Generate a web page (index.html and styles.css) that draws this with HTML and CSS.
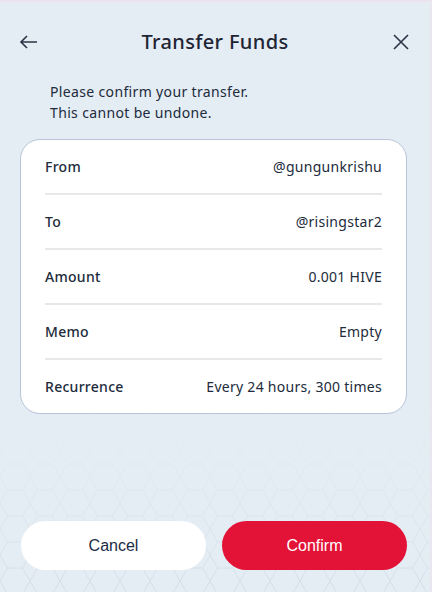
FILE: index.html
```html
<!DOCTYPE html>
<html lang="en">
<head>
  <meta charset="UTF-8">
  <title>Transfer Funds</title>
  <link rel="stylesheet" href="styles.css">
</head>
<body>
  <div class="screen">
    <svg class="hex-bg" width="432" height="180" viewBox="0 0 432 180">
      <defs>
        <pattern id="hex" width="30" height="26" patternUnits="userSpaceOnUse">
          <path d="M7.5 0 L22.5 0 L30 13 L22.5 26 L7.5 26 L0 13 Z" fill="none" stroke="#c8d4e0" stroke-width="1"/>
        </pattern>
        <linearGradient id="fade" x1="0" y1="0" x2="0" y2="1">
          <stop offset="0" stop-color="#fff" stop-opacity="0"/>
          <stop offset="0.5" stop-color="#fff" stop-opacity="0.4"/>
          <stop offset="1" stop-color="#fff" stop-opacity="1"/>
        </linearGradient>
        <mask id="fadeMask">
          <rect width="432" height="180" fill="url(#fade)"/>
        </mask>
      </defs>
      <rect width="432" height="180" fill="url(#hex)" mask="url(#fadeMask)"/>
    </svg>

    <div class="header">
      <button class="icon-btn" aria-label="Back">
        <svg width="20" height="20" viewBox="0 0 20 20">
          <path d="M18 10 H2 M8 4 L2 10 L8 16" fill="none" stroke="#2b3445" stroke-width="1.6"/>
        </svg>
      </button>
      <h1>Transfer Funds</h1>
      <button class="icon-btn" aria-label="Close">
        <svg width="20" height="20" viewBox="0 0 20 20">
          <path d="M3 3 L17 17 M17 3 L3 17" fill="none" stroke="#2b3445" stroke-width="1.6"/>
        </svg>
      </button>
    </div>

    <p class="intro">Please confirm your transfer.<br>This cannot be undone.</p>

    <div class="card">
      <div class="row"><span class="label">From</span><span class="value">@gungunkrishu</span></div>
      <div class="row"><span class="label">To</span><span class="value">@risingstar2</span></div>
      <div class="row"><span class="label">Amount</span><span class="value">0.001 HIVE</span></div>
      <div class="row"><span class="label">Memo</span><span class="value">Empty</span></div>
      <div class="row"><span class="label">Recurrence</span><span class="value">Every 24 hours, 300 times</span></div>
    </div>

    <div class="actions">
      <button class="btn btn-cancel">Cancel</button>
      <button class="btn btn-confirm">Confirm</button>
    </div>
  </div>
</body>
</html>
```

FILE: styles.css
```css
body { margin: 0; background: #e4ecf4; font-family: "Noto Sans", sans-serif; color: #212b3b; }
.screen {
  position: relative;
  width: 432px;
  height: 592px;
  box-sizing: border-box;
  border-top: 2px solid #ece3f0;
  border-right: 2px solid #e8e6ef;
  display: flex;
  flex-direction: column;
  overflow: hidden;
}
.hex-bg { position: absolute; left: 0; bottom: 0; opacity: 0.55; }
.header {
  display: flex;
  align-items: center;
  justify-content: space-between;
  padding: 0 18px 0 18px;
  height: 79px;
}
.header h1 { margin: 0; font-size: 20px; font-weight: 500; letter-spacing: 0.35px; color: #1e2433; }
.icon-btn { background: none; border: none; padding: 0; width: 22px; height: 22px; display: flex; align-items: center; justify-content: center; }
.intro { margin: 0 0 16px 50px; font-size: 14px; line-height: 21px; letter-spacing: 0.35px; color: #212b3b; }
.card {
  margin: 0 23px 0 20px;
  background: #fff;
  border: 1px solid #b8c5d8;
  border-radius: 20px;
  padding: 0 24px;
}
.row {
  display: flex;
  justify-content: space-between;
  align-items: center;
  height: 53px;
  font-size: 14px;
  letter-spacing: 0.28px;
}
.row + .row { border-top: 2px solid #e8e8e8; }
.label { font-weight: 500; }
.value { font-weight: 400; }
.actions {
  position: relative;
  margin-top: auto;
  display: flex;
  gap: 16px;
  padding: 0 23px 22px 21px;
}
.btn {
  flex: 1;
  height: 49px;
  border: none;
  border-radius: 25px;
  font-family: "Liberation Sans", Arial, sans-serif;
  font-size: 16px;
  cursor: pointer;
}
.btn-cancel { background: #fff; color: #1b2c45; }
.btn-confirm { background: #e31337; color: #fff; }
```
